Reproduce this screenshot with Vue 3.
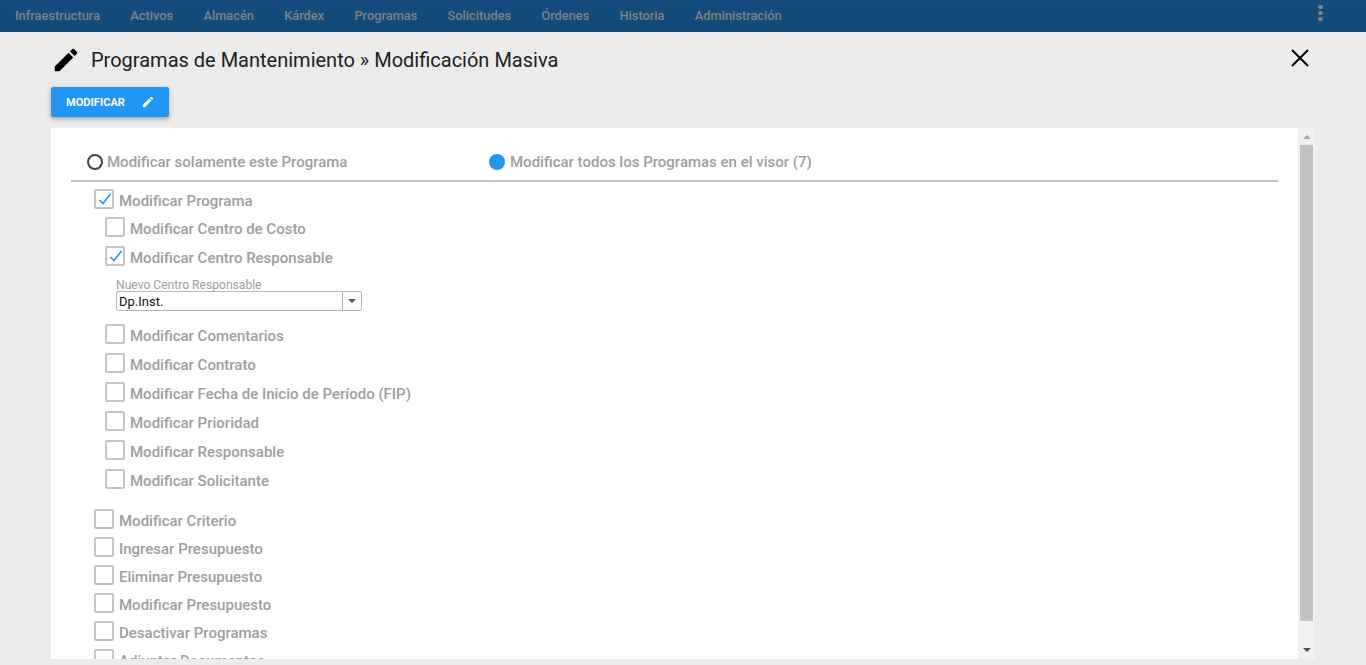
<script setup>
const navItems = ['Infraestructura', 'Activos', 'Almacén', 'Kárdex', 'Programas', 'Solicitudes', 'Órdenes', 'Historia', 'Administración']
const subOptionsTop = [{ label: 'Modificar Centro de Costo', on: false }, { label: 'Modificar Centro Responsable', on: true }]
const subOptionsBottom = ['Modificar Comentarios', 'Modificar Contrato', 'Modificar Fecha de Inicio de Período (FIP)', 'Modificar Prioridad', 'Modificar Responsable', 'Modificar Solicitante']
const mainOptions = ['Modificar Criterio', 'Ingresar Presupuesto', 'Eliminar Presupuesto', 'Modificar Presupuesto', 'Desactivar Programas', 'Adjuntar Documentos']
</script>

<template>
  <div class="page">
    <nav class="nav">
      <span v-for="item in navItems" :key="item" class="nav-item">{{ item }}</span>
      <span class="dots"><i></i><i></i><i></i></span>
    </nav>

    <header class="title-row">
      <svg class="title-pencil" viewBox="0 0 24 24" width="30" height="30"><path d="M3 17.25V21h3.75L17.81 9.94l-3.75-3.75L3 17.25zM20.71 7.04a1 1 0 0 0 0-1.41l-2.34-2.34a1 1 0 0 0-1.41 0l-1.83 1.83 3.75 3.75 1.83-1.83z"/></svg>
      <h1 class="title">Programas de Mantenimiento » Modificación Masiva</h1>
      <svg class="close" viewBox="0 0 18 18" width="18" height="18"><path d="M1 1l16 16M17 1L1 17" stroke="#000" stroke-width="2" fill="none"/></svg>
    </header>

    <button class="btn">
      MODIFICAR
      <svg viewBox="0 0 24 24" width="14" height="14"><path fill="#fff" d="M3 17.25V21h3.75L17.81 9.94l-3.75-3.75L3 17.25zM20.71 7.04a1 1 0 0 0 0-1.41l-2.34-2.34a1 1 0 0 0-1.41 0l-1.83 1.83 3.75 3.75 1.83-1.83z"/></svg>
    </button>

    <section class="panel">
      <div class="content">
        <div class="radios">
          <label class="radio radio-a"><span class="dot-off"></span>Modificar solamente este Programa</label>
          <label class="radio radio-b"><span class="dot-on"></span>Modificar todos los Programas en el visor (7)</label>
        </div>
        <div class="opts">
          <div class="opt main first">
            <span class="box"><svg viewBox="0 0 18 18" width="18" height="18"><path d="M3.5 9l3.5 3.5 7.5-9.5" stroke="#2196f3" stroke-width="1.5" fill="none"/></svg></span>
            Modificar Programa
          </div>
          <div class="subs">
            <div v-for="o in subOptionsTop" :key="o.label" class="opt sub">
              <span class="box"><svg v-if="o.on" viewBox="0 0 18 18" width="18" height="18"><path d="M3.5 9l3.5 3.5 7.5-9.5" stroke="#2196f3" stroke-width="1.5" fill="none"/></svg></span>
              {{ o.label }}
            </div>
            <div class="field">
              <div class="field-label">Nuevo Centro Responsable</div>
              <div class="select">
                <span class="select-value">Dp.Inst.</span>
                <span class="select-arrow"><i></i></span>
              </div>
            </div>
            <div v-for="o in subOptionsBottom" :key="o" class="opt sub"><span class="box"></span>{{ o }}</div>
          </div>
          <div class="mains">
            <div v-for="o in mainOptions" :key="o" class="opt main"><span class="box"></span>{{ o }}</div>
          </div>
        </div>
      </div>
      <div class="scrollbar">
        <span class="arrow-up"></span>
        <div class="track"><div class="thumb"></div></div>
        <span class="arrow-down"></span>
      </div>
    </section>
  </div>
</template>

<style scoped>
.page {
  height: 665px;
  background: #ebebeb;
  overflow: hidden;
  font-family: Roboto, sans-serif;
  display: flex;
  flex-direction: column;
}
.nav {
  height: 32px;
  flex: none;
  background: linear-gradient(#154c7e, #114a78);
  display: flex;
  align-items: center;
  padding-left: 15px;
  gap: 30.3px;
  position: relative;
}
.nav-item {
  font-size: 12.8px;
  font-weight: 500;
  color: #7f8386;
  line-height: 32px;
}
.dots {
  position: absolute;
  left: 1318px;
  top: 5px;
  display: flex;
  flex-direction: column;
  gap: 2px;
}
.dots i {
  width: 5px;
  height: 4px;
  border-radius: 50%;
  background: #85888a;
}
.title-row {
  height: 55px;
  flex: none;
  display: flex;
  align-items: center;
  padding: 0 57px 0 51px;
}
.title-pencil { flex: none; }
.title {
  margin: 0 0 0 10px;
  font-size: 20px;
  font-weight: 400;
  color: #212121;
  flex: 1;
}
.close { flex: none; margin-top: -3px; }
.btn {
  flex: none;
  width: 118px;
  height: 30px;
  margin-left: 51px;
  border: 0;
  border-radius: 2px;
  background: #2196f3;
  color: #fff;
  font-family: Roboto, sans-serif;
  font-size: 11.1px;
  font-weight: 700;
  display: flex;
  align-items: center;
  gap: 16px;
  padding: 0 0 0 15px;
  box-shadow: 0 2px 5px rgba(0, 0, 0, .3);
}
.panel {
  flex: none;
  margin: 11px 0 0 51px;
  width: 1264px;
  height: 531px;
  background: #fff;
  display: flex;
  overflow: hidden;
}
.content {
  flex: 1;
  min-width: 0;
  overflow: hidden;
  padding: 0 20px;
}
.radios {
  height: 54px;
  border-bottom: 2px solid #c4c2c3;
  display: flex;
  align-items: center;
  padding: 16px 0 0 16px;
  box-sizing: border-box;
}
.radio {
  font-size: 15px;
  font-weight: 500;
  color: #9e9e9e;
  display: flex;
  align-items: center;
  gap: 4px;
}
.radio-a { width: 402px; }
.radio-b { gap: 5px; }
.dot-off, .dot-on {
  width: 16px;
  height: 16px;
  border-radius: 50%;
  box-sizing: border-box;
  flex: none;
}
.dot-off { border: 2px solid #424242; }
.dot-on { background: #2196f3; }
.opts { padding-left: 23px; }
.opt {
  display: flex;
  align-items: center;
  font-size: 15px;
  font-weight: 500;
  color: #9e9e9e;
  gap: 5px;
}
.main { height: 28px; }
.sub { height: 29px; }
.first { margin-top: 5px; }
.subs { padding-left: 11px; margin-top: -1px; }
.box {
  width: 20px;
  height: 20px;
  box-sizing: border-box;
  border: 2px solid #c4c4c4;
  border-radius: 2px;
  flex: none;
  position: relative;
  top: -2px;
  background: #fff;
}
.box svg { display: block; }
.field { padding-left: 11px; margin: 7px 0 10px; }
.field-label {
  font-size: 12.1px;
  line-height: 12px;
  color: #9e9e9e;
}
.select {
  width: 246px;
  height: 20px;
  box-sizing: border-box;
  border: 1px solid #b5b5b5;
  border-radius: 2px;
  display: flex;
  align-items: center;
  justify-content: space-between;
  background: #fff;
}
.select-value {
  font-size: 13px;
  color: #111;
  padding-left: 2px;
}
.select-arrow {
  width: 18px;
  height: 18px;
  border-left: 1px solid #b5b5b5;
  display: flex;
  align-items: center;
  justify-content: center;
}
.select-arrow i {
  border-left: 4px solid transparent;
  border-right: 4px solid transparent;
  border-top: 4px solid #555;
}
.mains { margin-top: 12px; }
.scrollbar {
  flex: none;
  width: 17px;
  background: #f1f1f1;
  display: flex;
  flex-direction: column;
  align-items: center;
}
.arrow-up, .arrow-down {
  flex: none;
  width: 0;
  border-left: 4px solid transparent;
  border-right: 4px solid transparent;
}
.arrow-up { border-bottom: 4px solid #a8a8a8; margin: 7px 0 6px; }
.arrow-down { border-top: 4px solid #505050; margin: 0 0 7px; }
.track { flex: 1; width: 13px; padding-bottom: 17px; box-sizing: border-box; }
.thumb { width: 13px; height: 476px; background: #c1c1c1; }
</style>

<style>
html, body { margin: 0; background: #ebebeb; }
</style>
